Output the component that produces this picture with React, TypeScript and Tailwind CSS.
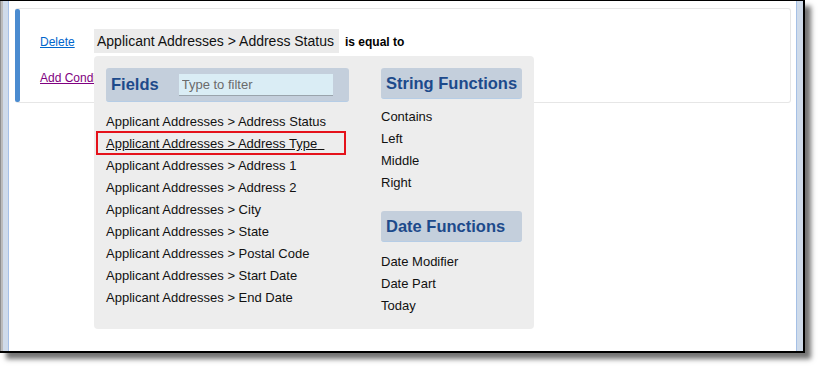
const fields = [
  'Address Status',
  'Address Type',
  'Address 1',
  'Address 2',
  'City',
  'State',
  'Postal Code',
  'Start Date',
  'End Date',
]

const stringFns = ['Contains', 'Left', 'Middle', 'Right']
const dateFns = ['Date Modifier', 'Date Part', 'Today']

function GroupHeader({ title, children }: { title: string; children?: React.ReactNode }) {
  return (
    <div className="flex items-center gap-[20px] rounded-[3px] bg-[#c4cfdc] border-b border-[#b6cde6] pl-[5px] h-[31px]">
      <span className="text-[16.5px] font-bold text-[#1d4a8b] leading-none">{title}</span>
      {children}
    </div>
  )
}

export default function App() {
  return (
    <div className="w-[821px] h-[367px] bg-white overflow-hidden font-['Liberation_Sans',Arial,sans-serif]">
      <div className="flex w-[805px] h-[353px] border-t border-r-2 border-b-2 border-black shadow-[6px_6px_5px_rgba(0,0,0,0.55)] bg-white">
        {/* left window edge */}
        <div className="w-[1px] bg-[#8e8e8e]" />
        <div className="w-[2px] bg-[#bcbcbc]" />
        <div className="w-[5px] bg-[#cfdbea]" />
        <div className="w-[1px] bg-[#a5c0e6]" />

        <div className="flex-1 pl-[6px] pt-[7px] pr-[5px]">
          <div className="flex h-[95px] rounded-[3px] border border-[#e6e6e6] border-l-0">
            <div className="w-[5px] rounded-[2px] bg-[#4a8bd0]" />
            <div className="flex-1 pl-[20px] pt-[20px]">
              <div className="flex items-center text-[12px]">
                <a href="#" className="text-[#0066cc] underline w-[54px] pt-[2px]">Delete</a>
                <div className="relative">
                  <div className="h-[24px] bg-[#ebebeb] pl-[3px] pr-[5px] pt-[1px] flex items-center text-[14px] text-[#111]">
                    Applicant Addresses &gt; Address Status
                  </div>
                  <div className="absolute left-0 top-[27px] z-10 w-[440px] h-[273px] rounded-[4px] bg-[#ededed] p-[12px] flex gap-[32px]">
                    <div className="w-[243px]">
                      <div className="flex items-center gap-[20px] rounded-[3px] bg-[#c4cfdc] border-b border-[#b6cde6] pl-[5px] h-[34px]">
                        <span className="text-[16.5px] font-bold text-[#1d4a8b] leading-none">Fields</span>
                        <input
                          placeholder="Type to filter"
                          className="w-[154px] h-[22px] bg-[#daedf5] border-b border-[#9aa4ac] px-[3px] text-[13px] text-[#333] placeholder:text-[#6b6b6b] outline-none"
                        />
                      </div>
                      <ul className="mt-[9px] text-[13px] text-[#111]">
                        {fields.map((f, i) => (
                          <li key={f} className="relative h-[22px] leading-[22px]">
                            {i === 1 ? (
                              <>
                                <span className="underline">Applicant Addresses &gt; {f}&nbsp;&nbsp;</span>
                                <div className="absolute -left-[10px] -top-[2px] w-[250px] h-[24px] border-2 border-[#e5121b]" />
                              </>
                            ) : (
                              <span>Applicant Addresses &gt; {f}</span>
                            )}
                          </li>
                        ))}
                      </ul>
                    </div>
                    <div className="w-[141px]">
                      <GroupHeader title="String Functions" />
                      <ul className="mt-[7px] text-[13px] text-[#111]">
                        {stringFns.map((s) => (
                          <li key={s} className="h-[22px] leading-[22px]">{s}</li>
                        ))}
                      </ul>
                      <div className="mt-[17px]">
                        <GroupHeader title="Date Functions" />
                      </div>
                      <ul className="mt-[9px] text-[13px] text-[#111]">
                        {dateFns.map((s) => (
                          <li key={s} className="h-[22px] leading-[22px]">{s}</li>
                        ))}
                      </ul>
                    </div>
                  </div>
                </div>
                <span className="ml-[6px] pt-[2px] font-bold text-black">is equal to</span>
              </div>
              <div className="mt-[16px] text-[12px]">
                <a href="#" className="text-[#800080] underline">Add Condition</a>
              </div>
            </div>
          </div>
        </div>

        {/* right window edge */}
        <div className="w-[1px] bg-[#a5c0e6]" />
        <div className="w-[6px] bg-[#cfdbea]" />
      </div>
    </div>
  )
}
